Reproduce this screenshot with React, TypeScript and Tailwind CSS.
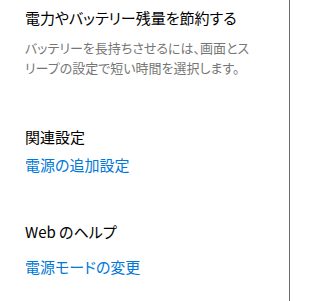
export default function App() {
  const font = "[font-family:'Noto_Sans_CJK_JP','Noto_Sans',sans-serif]"
  return (
    <div className={`w-[290px] h-[301px] bg-white border-r border-[#6b6b6b] pl-[25px] pt-[8px] ${font} [font-feature-settings:'palt']`}>
      {/* 電力 */}
      <section>
        <h2 className="text-[15px] leading-[20px] text-black">電力やバッテリー残量を節約する</h2>
        <p className="mt-[10px] text-[13px] leading-[20px] text-[#767676] w-[228px]">
          バッテリーを長持ちさせるには、画面とスリープの設定で短い時間を選択します。
        </p>
      </section>

      {/* 関連設定 */}
      <section className="mt-[49px]">
        <h3 className="text-[15px] leading-[20px] text-black">関連設定</h3>
        <a href="#" className="block mt-[8px] text-[15px] leading-[20px] text-[#0078d7]">
          電源の追加設定
        </a>
      </section>

      {/* Web のヘルプ */}
      <section className="mt-[47px]">
        <h3 className="text-[15px] leading-[20px] text-black">Web のヘルプ</h3>
        <a href="#" className="block mt-[15px] text-[15px] leading-[20px] text-[#0078d7]">
          電源モードの変更
        </a>
      </section>
    </div>
  )
}
